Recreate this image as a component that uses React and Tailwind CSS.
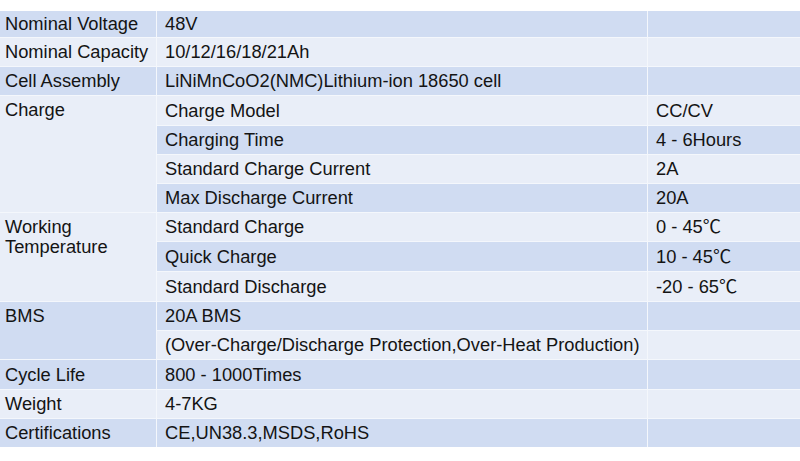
import React from 'react';

const DARK = 'bg-[#d0dcf2]';
const LIGHT = 'bg-[#e9eef8]';

const rows = [
  { label: 'Nominal Voltage', value: '48V', shade: DARK },
  { label: 'Nominal Capacity', value: '10/12/16/18/21Ah', shade: LIGHT },
  { label: 'Cell Assembly', value: 'LiNiMnCoO2(NMC)Lithium-ion 18650 cell', shade: DARK },
];

function Cell({ children, className = '' }) {
  return <div className={'flex items-center px-2 whitespace-nowrap ' + className}>{children}</div>;
}

function Group({ label, span, shade, items }) {
  return (
    <>
      <div
        className={'pl-[5px] pt-[4px] leading-[20px] ' + shade}
        style={{ gridRow: `span ${span} / span ${span}` }}
      >
        {label}
      </div>
      {items.map((it, i) => (
        <React.Fragment key={i}>
          <Cell className={it.shade}>{it.value}</Cell>
          <Cell className={it.shade}>{it.extra}</Cell>
        </React.Fragment>
      ))}
    </>
  );
}

function Single({ label, value, extra = '', shade }) {
  return (
    <>
      <div className={'flex items-center pl-[5px] whitespace-nowrap ' + shade}>{label}</div>
      <Cell className={shade}>{value}</Cell>
      <Cell className={shade}>{extra}</Cell>
    </>
  );
}

export default function App() {
  return (
    <div className="w-[800px] h-[461px] bg-white pt-[11px] font-['Liberation_Sans',Arial,'Noto_Sans_CJK_SC',sans-serif] text-[18.3px] text-[#141414]">
      <div className="grid grid-cols-[156px_490px_1fr] grid-rows-[26px_28px_28px_29px_28px_28px_28px_28px_29px_29px_28px_28px_29px_28px_28px] gap-px bg-[#f4f7fc]">
        {rows.map((r, i) => (
          <Single key={i} label={r.label} value={r.value} shade={r.shade} />
        ))}
        <Group
          label="Charge"
          span={4}
          shade={LIGHT}
          items={[
            { value: 'Charge Model', extra: 'CC/CV', shade: LIGHT },
            { value: 'Charging Time', extra: '4 - 6Hours', shade: DARK },
            { value: 'Standard Charge Current', extra: '2A', shade: LIGHT },
            { value: 'Max Discharge Current', extra: '20A', shade: DARK },
          ]}
        />
        <Group
          label={<>Working<br />Temperature</>}
          span={3}
          shade={LIGHT}
          items={[
            { value: 'Standard Charge', extra: '0 - 45℃', shade: LIGHT },
            { value: 'Quick Charge', extra: '10 - 45℃', shade: DARK },
            { value: 'Standard Discharge', extra: '-20 - 65℃', shade: LIGHT },
          ]}
        />
        <Group
          label="BMS"
          span={2}
          shade={DARK}
          items={[
            { value: '20A BMS', extra: '', shade: DARK },
            { value: '(Over-Charge/Discharge Protection,Over-Heat Production)', extra: '', shade: LIGHT },
          ]}
        />
        <Single label="Cycle Life" value="800 - 1000Times" shade={DARK} />
        <Single label="Weight" value="4-7KG" shade={LIGHT} />
        <Single label="Certifications" value="CE,UN38.3,MSDS,RoHS" shade={DARK} />
      </div>
    </div>
  );
}
